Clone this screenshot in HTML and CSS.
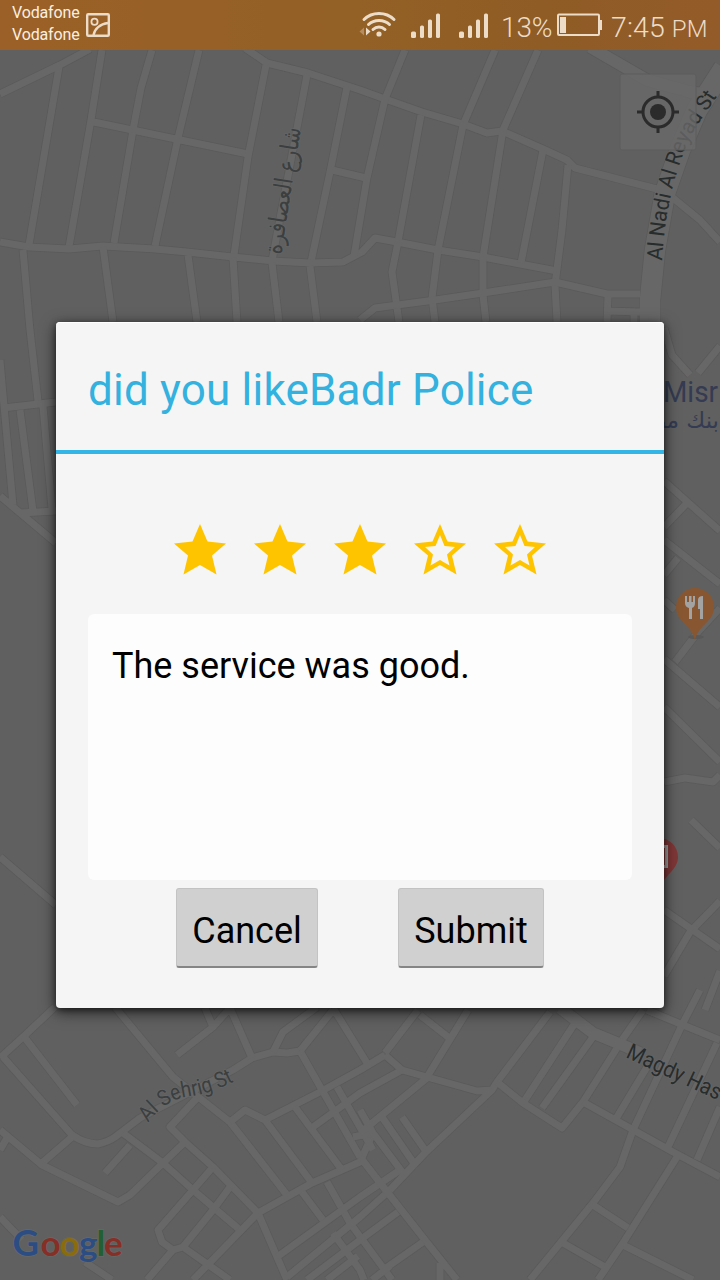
FILE: index.html
```html
<!DOCTYPE html>
<html lang="en">
<head>
<meta charset="utf-8">
<title>Rate place</title>
<link rel="stylesheet" href="styles.css">
</head>
<body>
<div class="screen">
  <header class="status">
    <div class="carriers"><span>Vodafone</span><span>Vodafone</span></div>
    <svg class="pic-icon" width="24" height="24" viewBox="0 0 24 24" fill="none" stroke="#ecdcc8">
      <rect x="1.2" y="1.2" width="21.6" height="21.6" rx="1" stroke-width="2.4"/>
      <circle cx="8.5" cy="8.8" r="3.1" stroke-width="1.8"/>
      <path d="M7.5 22C8.500 16 14 11 22 10" stroke-width="2.4"/>
    </svg>
    <div class="spacer"></div>
    <svg class="wifi" width="38" height="28" viewBox="0 0 38 28" fill="none" stroke="#ecdcc8" stroke-width="3" stroke-linecap="round">
      <path d="M5 8.500C13 0.500 27 0.500 35 8.500M9.500 13.500C15 8 25 8 30.500 13.500M14 18.500C17.500 15 22.500 15 26 18.500"/>
      <circle cx="20" cy="23" r="2.600" fill="#ecdcc8" stroke="none"/>
      <path d="M7 16.500L11.500 20.500L7 24.500Z" fill="#ecdcc8" stroke="none"/>
      <path d="M5 16.500L0.500 20.500L5 24.500Z" fill="#b58d62" stroke="none"/>
    </svg>
    <svg class="signal" width="30" height="26" viewBox="0 0 30 26" fill="#ecdcc8">
      <rect x="0" y="18.500" width="5" height="6.500" rx="1.500"/><rect x="9" y="12.500" width="4" height="12.500" rx="1.500"/><rect x="17" y="6.500" width="4" height="18.500" rx="1.500"/><rect x="25" y="0.500" width="4" height="24.500" rx="1.500"/>
    </svg>
    <svg class="signal second" width="30" height="26" viewBox="0 0 30 26" fill="#ecdcc8">
      <rect x="0" y="18.500" width="5" height="6.500" rx="1.500"/><rect x="9" y="12.500" width="4" height="12.500" rx="1.500"/><rect x="17" y="6.500" width="4" height="18.500" rx="1.500"/><rect x="25" y="0.500" width="4" height="24.500" rx="1.500"/>
    </svg>
    <span class="percent">13%</span>
    <svg class="battery" width="46" height="24" viewBox="0 0 46 24">
      <rect x="1" y="1.500" width="41" height="20.500" rx="1" fill="none" stroke="#ecdcc8" stroke-width="2"/>
      <rect x="3" y="4" width="6" height="16" fill="#ecdcc8"/>
      <rect x="42" y="7" width="3" height="10" fill="#ecdcc8"/>
    </svg>
    <span class="clock">7:45 <small>PM</small></span>
  </header>

  <main class="stage">
    <svg class="map" viewBox="0 50 720 1230" width="720" height="1230">
      <defs>
        <g id="streets" fill="none" stroke-linejoin="round">
          <path d="M0 94L60 65L90 49M59 67L29 245M102 50L91 120L69 247M152 50L141 88L133 130L114 243M199 50L178 138L155 246M89 121L248 154"/>
          <path d="M245 48L267 63L308 73L360 90L385 99L422 112L463 124L487 133L502 131L543 149L567 160L575 168L657 189"/>
          <path d="M266 65L248 157L234 255M307 75L297 128L272 261M347 87L330 172L311 262M332 170L366 178"/>
          <path d="M0 242L29 247L69 249L103 246L155 249L187 252L233 257L273 261L310 263L343 262L362 252L375 238L397 242L438 250L483 257L520 264L557 271"/>
          <path d="M23 250L30 330L38 401M103 247L113 322M188 255L197 322M233 258L237 322M272 263L279 322M310 266L317 322"/>
          <path d="M405 50L385 99L367 178L354 256M495 50L463 125L438 250L432 298L435 322M538 50L503 130L483 257L483 295L486 322M421 115L398 242L392 272L399 322M543 150L521 263M568 165L562 230L555 285L557 322"/>
          <path d="M360 320L375 308L435 300L483 293L555 282L607 294L640 294M608 296L607 322M608 311L640 312M634 312V322M673 198L700 220L720 242"/>
          <path d="M664 328L672 355L690 375M720 346L698 373M664 481L720 531M664 527L687 503M664 540L720 584M664 575L678 558M664 600L675 610M664 659L720 707M675 662L698 632L720 608M664 707L720 762M664 782L685 778L713 782L720 775M691 820L720 848M664 910L720 949M720 901L690 932L664 976M720 971L705 1010"/>
          <path d="M0 360L4 406L13 505M3 408L56 402M20 410L33 511M43 406L52 509M20 513L56 511M0 496L56 543M0 857L56 905"/>
          <path d="M55 1007L23 1037L0 1058M25 1038L77 1105M3 1057L72 1135Q85 1144 98 1144Q108 1142 115 1137L140 1118L233 1070L252 1058L273 1052L287 1053L300 1051M115 1007L173 1077L230 1122L287 1195M72 1137L42 1163"/>
          <path d="M0 1130L42 1165L118 1202L130 1195L163 1163L185 1142M0 1150L7 1138M123 1133L163 1163L193 1190L240 1230M130 1145L105 1173M197 1098L170 1127L185 1142L213 1167L258 1213L277 1257L287 1280"/>
          <path d="M213 1167L193 1190L158 1230L162 1242L173 1250L147 1280M173 1250L183 1247L213 1210L230 1187M183 1247L230 1280M193 1280L258 1213L312 1183L360 1162L373 1133M230 1122L245 1110L265 1120L320 1092L360 1070L385 1055M265 1120L312 1183"/>
          <path d="M177 1055L213 1027L230 1008M205 1008L213 1027M230 1008L252 1058M273 1052L283 1032L317 1007M300 1051L333 1010M300 1051L322 1090L360 1157M333 1008L367 1063M295 1107L342 1170M337 1087L373 1150M313 1127L360 1093L402 1070M302 1192L323 1220M327 1182L350 1223L387 1273L392 1280"/>
          <path d="M277 1257L360 1197L403 1168M287 1277L360 1217L390 1190M307 1280L360 1240L398 1212M327 1280L358 1256M333 1233L360 1270L364 1280M0 1217L22 1240M85 1262L112 1280M353 1137L373 1133"/>
          <path d="M418 1010L385 1053M420 1015L448 1037M468 1010L427 1077M385 1055L402 1070L427 1077L477 1091L492 1090L497 1082L550 1012M360 1133L427 1078M492 1090L425 1153L390 1190M382 1117L413 1162M402 1117L425 1150M360 1110L373 1133L403 1173M360 1157L388 1193L425 1240L457 1280M440 1263V1280"/>
          <path d="M497 1082L523 1103L562 1128L583 1102L617 1048M575 1023L525 1100M593 1037L542 1108M643 1010L622 1040M647 1010L683 1025L720 1040M700 990L682 1025L633 1130L620 1167L593 1203L530 1280"/>
          <path d="M583 1102L637 1132L673 1152L720 1177M717 1043L668 1147M647 1067L617 1117M720 1107L697 1160M677 1157L623 1243L598 1280M590 1203L628 1228M563 1243L605 1267M623 1245L693 1280M383 1270L423 1242M372 1280L390 1266"/>
        </g>
        <g id="avenues" fill="none" stroke-linejoin="round">
          <path d="M650 330V300L655 250L665 193L680 150L697 110L724 68"/>
        </g>
        <g id="lanes" fill="none" stroke-linejoin="round">
          <path d="M590 47L647 80L690 92L705 94M560 1008L593 1033L627 1047L640 1053"/>
        </g>
      </defs>
      <rect y="50" width="720" height="1230" fill="#606060"/>
      <use href="#streets" class="casing"/>
      <use href="#avenues" class="casing wide"/>
      <use href="#lanes" class="casing mid"/>
      <use href="#streets" class="road"/>
      <use href="#avenues" class="road wide"/>
      <use href="#lanes" class="road mid"/>

      <text class="label arabic" transform="translate(281 255) rotate(-81)" textLength="128" lengthAdjust="spacingAndGlyphs" direction="ltr">شارع العصافرة</text>
      <path id="nadi" d="M662 261C665 215 672 185 682 157S700 122 718 95" fill="none"/>
      <text class="label dark"><textPath href="#nadi" textLength="177" lengthAdjust="spacingAndGlyphs">Al Nadi Al Reyad St</textPath></text>
      <path id="sehrig" d="M148 1123C161 1106 174 1098 192 1096Q212 1093 235 1081" fill="none"/>
      <text class="label small"><textPath href="#sehrig" textLength="98" lengthAdjust="spacingAndGlyphs">Al Sehrig St</textPath></text>
      <text class="label dark magdy" transform="translate(625 1057) rotate(25)" textLength="102" lengthAdjust="spacingAndGlyphs">Magdy Has</text>
      <text class="label bank" x="663" y="402" textLength="55" lengthAdjust="spacingAndGlyphs">Misr</text>
      <text class="label bank ar" x="719" y="428" text-anchor="end" direction="ltr">بنك مصر</text>

      <ellipse cx="696" cy="637" rx="8" ry="2" fill="#595959"/>
      <path d="M695 588A19 19 0 0 1 714 607C714 622 699 624 695 640C691 624 676 622 676 607A19 19 0 0 1 695 588Z" fill="#885731"/>
      <path d="M685 596V603Q685 607 689 608V619H692V608Q695 607 695 603V596H693V602H691.500V596H689V602H687V596ZM698 600Q698 596 703 596V619H700V609H698Z" fill="#a3a3a3"/>
      <path d="M659 838A19 19 0 0 1 678 857C678 870 664 875 659 889C654 875 640 870 640 857A19 19 0 0 1 659 838Z" fill="#803737"/>
      <path d="M660 845H668V868H660" fill="#a3a3a3"/><path d="M660 848H665V865H660" fill="#803737"/>

      <text class="google" y="1256"><tspan class="cap" x="12.500" fill="#2b4d83">G</tspan><tspan x="40.500" fill="#862f27">o</tspan><tspan x="59.500" fill="#8b6c0d">o</tspan><tspan x="79" fill="#2b4d83">g</tspan><tspan x="96.500" fill="#225f32">l</tspan><tspan x="104" fill="#862f27">e</tspan></text>

      <rect class="locate" x="620" y="74" width="76" height="76" rx="2"/>
      <g fill="none" stroke="#2b2b2b">
        <circle cx="658" cy="112" r="15" stroke-width="3"/>
        <path d="M658 91V97M658 127V133M637 112H643M673 112H679" stroke-width="3"/>
        <circle cx="658" cy="112" r="8" fill="#2b2b2b" stroke="none"/>
      </g>
    </svg>

    <section class="dialog">
      <h1 class="title"><span>did you likeBadr Police</span></h1>
      <div class="stars">
        <svg viewBox="0 0 52 52" class="star"><path d="M26 0L33.500 17.500L52 19.500L38 31.500L42.500 50.500L26 41L9.500 50.500L14 31.500L0 19.500L18.500 17.500Z"/></svg>
        <svg viewBox="0 0 52 52" class="star"><path d="M26 0L33.500 17.500L52 19.500L38 31.500L42.500 50.500L26 41L9.500 50.500L14 31.500L0 19.500L18.500 17.500Z"/></svg>
        <svg viewBox="0 0 52 52" class="star"><path d="M26 0L33.500 17.500L52 19.500L38 31.500L42.500 50.500L26 41L9.500 50.500L14 31.500L0 19.500L18.500 17.500Z"/></svg>
        <svg viewBox="0 0 52 52" class="star"><path fill-rule="evenodd" d="M26 0L33.500 17.500L52 19.500L38 31.500L42.500 50.500L26 41L9.500 50.500L14 31.500L0 19.500L18.500 17.500ZM26 11L21.500 22L11 23L19 30.500L16.500 41.500L26 36L35.500 41.500L33 30.500L41 23L30.500 22Z"/></svg>
        <svg viewBox="0 0 52 52" class="star"><path fill-rule="evenodd" d="M26 0L33.500 17.500L52 19.500L38 31.500L42.500 50.500L26 41L9.500 50.500L14 31.500L0 19.500L18.500 17.500ZM26 11L21.500 22L11 23L19 30.500L16.500 41.500L26 36L35.500 41.500L33 30.500L41 23L30.500 22Z"/></svg>
      </div>
      <div class="comment"><span>The service was good.</span></div>
      <div class="actions">
        <button class="btn cancel">Cancel</button>
        <button class="btn submit">Submit</button>
      </div>
    </section>
  </main>
</div>
</body>
</html>
```
FILE: styles.css
```css
* { box-sizing: border-box; }
body { margin: 0; font-family: Roboto, "Noto Sans", sans-serif; }
.screen { width: 720px; height: 1280px; overflow: hidden; display: flex; flex-direction: column; background: #606060; }

.status { height: 50px; flex: none; display: flex; align-items: center; padding: 0 12px; color: #ecdcc8; background: linear-gradient(90deg, #9b6027, #936026 50%, #8f5c25 75%, #935b29); white-space: nowrap; }
.carriers { display: flex; flex-direction: column; width: 74px; font-size: 16px; line-height: 22px; color: #fbefe0; padding-bottom: 3px; letter-spacing: -.15px; }
.pic-icon { flex: none; }
.spacer { flex: 1; }
.wifi { margin: 0 14px 0 0; flex: none; }
.signal { margin: 1px 18px 0 0; flex: none; }
.signal.second { margin-right: 12px; }
.percent { width: 56px; font-size: 28px; font-weight: 300; letter-spacing: -.1px; padding-top: 4px; }
.battery { flex: none; margin-right: 8px; }
.clock { width: 97px; font-size: 28.500px; font-weight: 300; padding-top: 4px; letter-spacing: .1px; }
.clock small { font-size: 24px; }

.stage { display: grid; width: 720px; height: 1230px; }
.stage > * { grid-area: 1 / 1; }
.map { display: block; }
.casing { stroke: #5a5a5a; stroke-width: 8.500px; fill: none; }
.road { stroke: #676767; stroke-width: 7px; fill: none; }
.casing.wide { stroke-width: 22px; }
.road.wide { stroke-width: 20.500px; }
.casing.mid { stroke-width: 13px; }
.road.mid { stroke-width: 11.500px; }
.label { font-size: 21.500px; fill: #3b3f3f; stroke: #676767; stroke-width: 1.500px; paint-order: stroke; }
.label.dark { fill: #272c2c; }
.label.small { font-size: 22px; }
.label.magdy { font-size: 22.500px; }
.label.arabic { font-family: "DejaVu Sans", sans-serif; font-size: 25px; }
.label.bank { font-size: 29px; fill: #343b52; stroke: #606060; }
.label.bank.ar { font-family: "DejaVu Sans", sans-serif; font-size: 23px; }
.google { font-family: Lato, sans-serif; font-weight: 700; font-size: 35px; stroke: #686868; stroke-width: 1.500px; paint-order: stroke; }
.google .cap { font-size: 36.500px; }
.locate { fill: #696969; fill-opacity: .8; stroke: #5d5d5d; stroke-width: 1px; }

.dialog { width: 608px; height: 686px; margin: 272px 0 0 56px; border-radius: 4px; background: #f5f5f5; box-shadow: 0 4px 16px rgba(0,0,0,.6), 0 2px 6px rgba(0,0,0,.5), inset 0 1px 0 #fff; display: flex; flex-direction: column; }
.title { margin: 0; height: 132px; flex: none; padding: 8px 32px 0; border-bottom: 4px solid #33b5e5; display: flex; align-items: center; font-weight: 400; font-size: 44px; letter-spacing: .2px; color: #33b1df; white-space: nowrap; }
.stars { display: flex; gap: 28px; padding: 70px 0 0 118px; height: 160px; flex: none; }
.star { width: 52px; height: 52px; fill: #ffc400; }
.comment { margin: 0 32px; height: 266px; flex: none; border-radius: 6px; background: #fdfdfd; padding: 30px 24px; font-size: 36px; line-height: 44px; color: #000; white-space: nowrap; }
.actions { display: flex; gap: 80px; padding: 8px 0 0 120px; }
.btn { height: 80px; padding: 6px 0 0; border: 1px solid #c3c3c3; border-bottom: 2px solid #858585; border-radius: 3px; background: #d0d0d0; font: 400 36px Roboto, sans-serif; color: #000; }
.cancel { width: 142px; }
.submit { width: 146px; }
```
